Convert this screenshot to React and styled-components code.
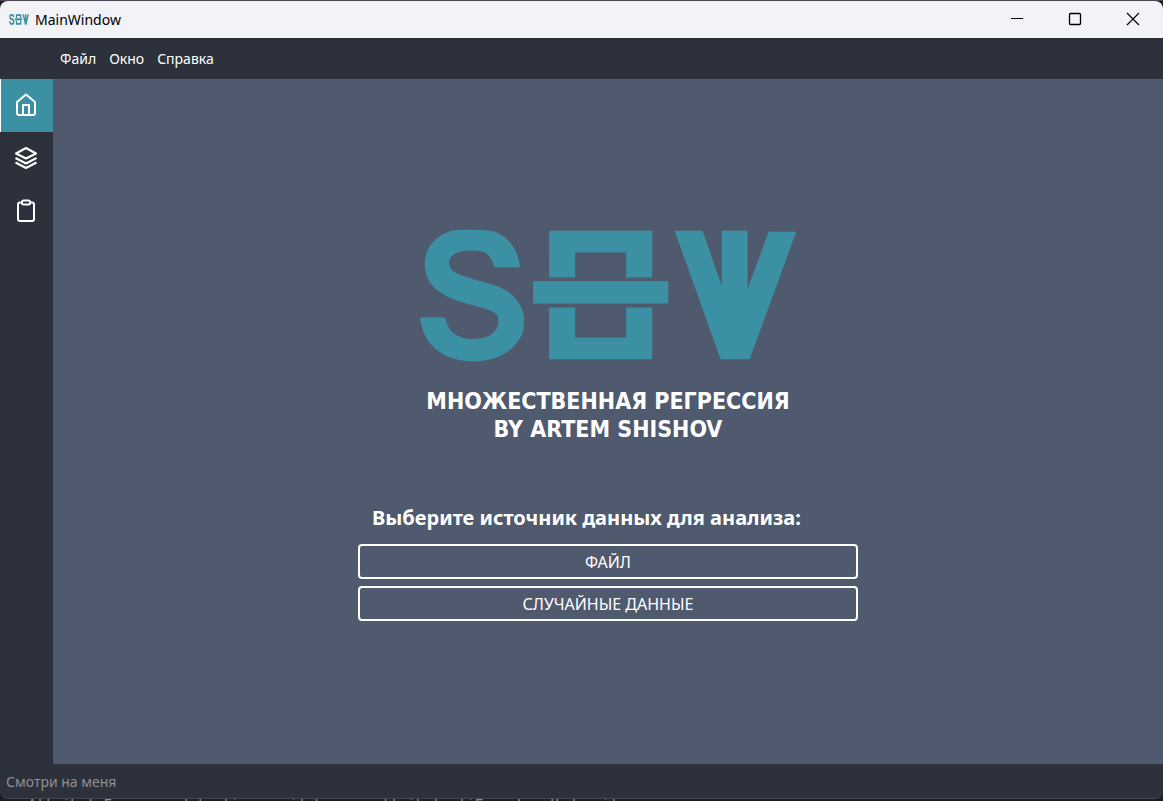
import React from "react";
import styled, { createGlobalStyle } from "styled-components";

const dark = "#2c313c";
const slate = "#505a6e";
const teal = "#3c90a4";

const GlobalStyle = createGlobalStyle`
  *, *::before, *::after { box-sizing: border-box; }
  html, body, #root { height: 100%; }
  body {
    margin: 0;
    background: #1c1e26;
    font-family: "Noto Sans", "Open Sans", sans-serif;
    color: #fff;
  }
  button { font: inherit; color: inherit; background: none; border: 0; padding: 0; }
`;

const Desktop = styled.div`
  height: 100%;
  min-height: 480px;
  display: flex;
  flex-direction: column;
  overflow: hidden;
  padding-top: 1px;
  background: linear-gradient(#4a4850, #4a4850) top / 100% 1px no-repeat, #1c1e26;
`;

const Window = styled.div`
  flex: 1;
  min-height: 0;
  display: flex;
  flex-direction: column;
  border-radius: 8px;
  overflow: hidden;
  background: ${dark};
`;

const ConsoleLine = styled.div`
  height: 2px;
  overflow: hidden;
  padding-left: 28px;
  font: 14px/10px "DejaVu Sans Mono", monospace;
  white-space: pre;
  color: #8d9099;
`;

const TitleBar = styled.header`
  height: 37px;
  flex: none;
  display: flex;
  align-items: center;
  padding: 0 1px 0 9px;
  background: #f1f3f7;
  color: #000;
`;

const Title = styled.h1`
  margin: 0 auto 0 6px;
  font-size: 14px;
  line-height: 20px;
  font-weight: 400;
`;

const CaptionButton = styled.button`
  && {
    width: 58px;
    height: 37px;
    display: grid;
    place-items: center;
    padding-bottom: 1px;
  }
`;

const MenuBar = styled.nav`
  height: 41px;
  flex: none;
  display: flex;
  align-items: center;
  gap: 13px;
  padding-left: 60px;
  font-size: 14px;
  line-height: 20px;
`;

const Body = styled.div`
  flex: 1;
  min-height: 0;
  display: flex;
`;

const Sidebar = styled.nav`
  width: 53px;
  flex: none;
`;

const SideButton = styled.button`
  && {
    width: 100%;
    height: 53px;
    display: grid;
    place-items: center;
    padding: 0 2px 1px 0;
    border-left: 1px solid ${(p) => (p.$active ? "#fff" : "transparent")};
    background: ${(p) => (p.$active ? teal : "transparent")};
  }
`;

const Main = styled.main`
  flex: 1;
  display: flex;
  flex-direction: column;
  align-items: center;
  justify-content: center;
  padding-top: 7px;
  background: ${slate};
`;

const Heading = styled.h2`
  margin: 25px 0 61px;
  font-family: "DejaVu Sans Condensed", "DejaVu Sans", sans-serif;
  font-size: 23px;
  line-height: 28px;
  font-weight: 700;
  text-align: center;
`;

const Source = styled.section`
  width: 500px;
  max-width: 100%;
  display: flex;
  flex-direction: column;
  gap: 7px;
`;

const Prompt = styled.h3`
  margin: 0 0 5px;
  padding-left: 14px;
  font-size: 20px;
  line-height: 28px;
  font-weight: 700;
`;

const SourceButton = styled.button`
  && {
    height: 35px;
    border: 2px solid #fff;
    border-radius: 4px;
    font-size: 16px;
    line-height: 24px;
  }
`;

const StatusBar = styled.footer`
  height: 35px;
  flex: none;
  display: flex;
  align-items: center;
  padding: 2px 0 0 6px;
  border-bottom: 1px solid #454953;
  border-radius: 0 0 8px 8px;
  font-size: 14px;
  line-height: 20px;
  color: #8f8f8f;
`;

function Logo({ width, height }) {
  return (
    <svg width={width} height={height} viewBox="30 28 1130 400" preserveAspectRatio="none" fill={teal} role="img" aria-label="SOW">
      <path d="M330 143H252C248 120 236 105 222 98Q210 93 184 93C145 93 117 105 117 131C117 155 145 167 200 182C260 198 290 208 312 232C330 252 342 275 342 300C342 335 337 345 325 364C300 403 250 426 190 426C100 426 38 375 30 294H106C112 335 140 359 192 359C240 359 265 335 265 305C265 280 255 275 180 255C90 232 44 195 44 133C44 75 95 30 150 30H190Q245 30 257 38C300 55 325 95 330 143Z" />
      <path d="M417 33H726V174H648V99H495V174H417Z" />
      <path d="M369 185H774V252H369Z" />
      <path d="M417 264H495V354H648V264H726V420H417Z" />
      <path d="M793 33H877L935 201V33H1012V208L1075 36H1158L1018 420H931Z" />
    </svg>
  );
}

function SideIcon({ children }) {
  return (
    <svg width="24" height="24" viewBox="0 0 24 24" fill="none" stroke="#fff" strokeWidth="2" strokeLinejoin="round" aria-hidden="true">
      {children}
    </svg>
  );
}

function CaptionIcon({ children }) {
  return (
    <svg width="14" height="14" viewBox="0 0 14 14" fill="none" stroke="#000" aria-hidden="true">
      {children}
    </svg>
  );
}

export default function App() {
  return (
    <Desktop>
      <GlobalStyle />
      <Window>
        <TitleBar>
          <Logo width={20} height={11} />
          <Title>MainWindow</Title>
          <CaptionButton aria-label="Minimize">
            <CaptionIcon><path d="M1 6.5H13" /></CaptionIcon>
          </CaptionButton>
          <CaptionButton aria-label="Maximize">
            <CaptionIcon><rect x="1.5" y="1.5" width="11" height="11" rx="1" strokeWidth="1.3" /></CaptionIcon>
          </CaptionButton>
          <CaptionButton aria-label="Close">
            <CaptionIcon><path d="M1 1L13 13M13 1L1 13" strokeWidth="1.2" /></CaptionIcon>
          </CaptionButton>
        </TitleBar>
        <MenuBar>
          <button>Файл</button>
          <button>Окно</button>
          <button>Справка</button>
        </MenuBar>
        <Body>
          <Sidebar>
            <SideButton $active aria-label="Home">
              <SideIcon>
                <path d="M3 9L12 1.500L21 9V20Q21 22 19 22H5Q3 22 3 20Z" />
                <path d="M9 22V12H15V22" />
              </SideIcon>
            </SideButton>
            <SideButton aria-label="Layers">
              <SideIcon>
                <path d="M12 2L22 7.500L12 12.500L2 7.500Z" />
                <path d="M1.500 12L12 17.500L22.500 12" />
                <path d="M1.500 16.500L12 22L22.500 16.500" />
              </SideIcon>
            </SideButton>
            <SideButton aria-label="Clipboard">
              <SideIcon>
                <path d="M8 3.500H6Q4 3.500 4 5.500V20Q4 22 6 22H18Q20 22 20 20V5.500Q20 3.500 18 3.500H16" />
                <rect x="8" y="1.500" width="8" height="4" rx="1.500" />
              </SideIcon>
            </SideButton>
          </Sidebar>
          <Main>
            <Logo width={377} height={133} />
            <Heading>
              МНОЖЕСТВЕННАЯ РЕГРЕССИЯ
              <br />
              BY ARTEM SHISHOV
            </Heading>
            <Source>
              <Prompt>Выберите источник данных для анализа:</Prompt>
              <SourceButton>ФАЙЛ</SourceButton>
              <SourceButton>СЛУЧАЙНЫЕ ДАННЫЕ</SourceButton>
            </Source>
          </Main>
        </Body>
        <StatusBar>Смотри на меня</StatusBar>
      </Window>
      <ConsoleLine>AttributeError: module 'ions_uri' has no attribute 'iFrameLoopUpdowni'</ConsoleLine>
    </Desktop>
  );
}
